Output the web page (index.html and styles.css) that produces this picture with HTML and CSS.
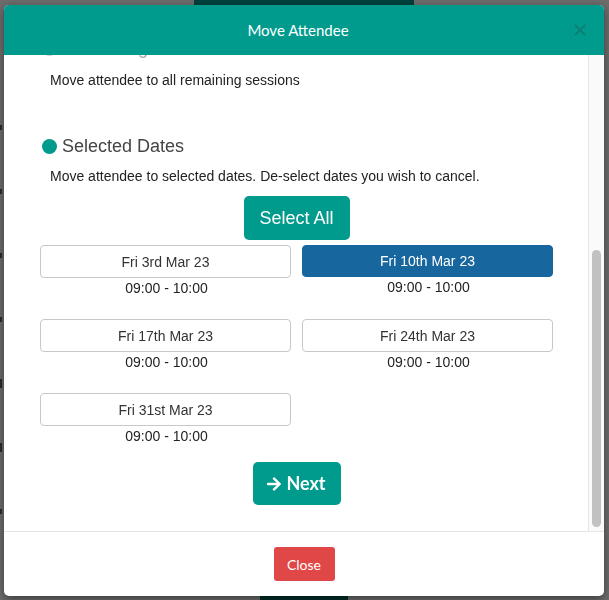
FILE: index.html
```html
<!DOCTYPE html>
<html lang="en">
<head>
<meta charset="utf-8">
<title>Move Attendee</title>
<link rel="stylesheet" href="styles.css">
</head>
<body>
<div class="page">
  <div class="page-top"><div class="page-tab"></div></div>
  <div class="page-rows">
    <div class="page-row"><span class="mark"></span></div>
    <div class="page-row"><span class="mark"></span></div>
    <div class="page-row"><span class="mark"></span></div>
    <div class="page-row"><span class="mark"></span></div>
    <div class="page-row"><span class="mark tall"></span></div>
    <div class="page-row"><span class="mark tall"></span></div>
    <div class="page-row"><span class="mark"></span></div>
  </div>
  <div class="page-bottom"><div class="page-btn"></div></div>
</div>
<div class="backdrop"></div>
<div class="modal">
  <div class="modal-header">
    <h4 class="modal-title">Move Attendee</h4>
    <button class="close" aria-label="Close">
      <svg width="12" height="12" viewBox="0 0 12 12"><path d="M1.5 1.5L10.5 10.5M10.5 1.5L1.5 10.5" stroke="#0b7f74" stroke-width="1.9" stroke-linecap="square"/></svg>
    </button>
  </div>
  <div class="modal-body-wrap">
    <div class="modal-body">
      <div class="option option-cut">
        <span class="radio radio-off"></span>
        <span class="option-label">Remaining Dates</span>
      </div>
      <p class="desc">Move attendee to all remaining sessions</p>

      <div class="option option-selected">
        <span class="radio radio-on"></span>
        <span class="option-label">Selected Dates</span>
      </div>
      <p class="desc">Move attendee to selected dates. De-select dates you wish to cancel.</p>

      <div class="center-row">
        <button class="btn btn-teal btn-select">Select All</button>
      </div>

      <div class="dates">
        <div class="date">
          <button class="date-btn">Fri 3rd Mar 23</button>
          <div class="time">09:00 - 10:00</div>
        </div>
        <div class="date">
          <button class="date-btn active">Fri 10th Mar 23</button>
          <div class="time">09:00 - 10:00</div>
        </div>
        <div class="date">
          <button class="date-btn">Fri 17th Mar 23</button>
          <div class="time">09:00 - 10:00</div>
        </div>
        <div class="date">
          <button class="date-btn">Fri 24th Mar 23</button>
          <div class="time">09:00 - 10:00</div>
        </div>
        <div class="date">
          <button class="date-btn">Fri 31st Mar 23</button>
          <div class="time">09:00 - 10:00</div>
        </div>
      </div>

      <div class="center-row">
        <button class="btn btn-teal btn-next">
          <svg class="arrow" width="14" height="16" viewBox="0 0 448 512"><path fill="#fff" d="M190.5 66.9l22.2-22.2c9.4-9.4 24.6-9.4 33.9 0L441 239c9.4 9.4 9.4 24.6 0 33.9L246.6 467.3c-9.4 9.4-24.6 9.4-33.9 0l-22.2-22.2c-9.5-9.5-9.3-25 .4-34.3L311.4 296H24c-13.3 0-24-10.7-24-24v-32c0-13.3 10.7-24 24-24h287.4L190.9 101.2c-9.8-9.3-10-24.8-.4-34.3z"/></svg>
          <span>Next</span>
        </button>
      </div>
    </div>
    <div class="scrollbar"><div class="thumb"></div></div>
  </div>
  <div class="modal-footer">
    <button class="btn btn-red">Close</button>
  </div>
</div>
</body>
</html>
```
FILE: styles.css
```css
* { box-sizing: border-box; }
html, body { margin: 0; padding: 0; }
body {
  width: 609px;
  height: 600px;
  overflow: hidden;
  font-family: "Liberation Sans", Arial, sans-serif;
  background: #ffffff;
  position: relative;
}

/* page behind the dialog */
.page {
  width: 609px;
  height: 600px;
  display: flex;
  flex-direction: column;
  background: #ffffff;
}
.page-top { height: 5px; display: flex; }
.page-tab { margin-left: 194px; width: 220px; background: #009b8d; }
.page-rows {
  flex: 1;
  display: flex;
  flex-direction: column;
  padding-top: 112px;
  gap: 44px;
}
.page-row {
  height: 20px;
  display: flex;
  align-items: center;
}
.mark {
  width: 2px;
  height: 5px;
  background: #666;
}
.mark.tall { height: 9px; }
.page-bottom { height: 8px; display: flex; margin-top: auto; }
.page-btn { margin-left: 260px; width: 88px; background: #006b61; }

.backdrop {
  position: fixed;
  inset: 0;
  background: rgba(0, 0, 0, 0.58);
}

/* dialog */
.modal {
  position: fixed;
  left: 4px;
  top: 5px;
  width: 600px;
  height: 591px;
  background: #ffffff;
  border-radius: 5px;
  box-shadow: 0 3px 9px rgba(0, 0, 0, 0.45);
  display: flex;
  flex-direction: column;
  overflow: hidden;
}
.modal-header {
  height: 50px;
  flex: none;
  background: #009b8d;
  display: flex;
  align-items: center;
  justify-content: center;
  position: relative;
}
.modal-title {
  margin: 0 0 0 -12px;
  font-family: Lato, "Liberation Sans", sans-serif;
  font-weight: 400;
  font-size: 15px;
  color: #ffffff;
}
.close {
  position: absolute;
  right: 18px;
  top: 19px;
  width: 12px;
  height: 12px;
  padding: 0;
  border: 0;
  background: transparent;
  display: flex;
}

.modal-body-wrap {
  height: 476px;
  flex: none;
  display: flex;
  overflow: hidden;
}
.modal-body {
  flex: 1;
  padding: 0 35px 0 36px;
  overflow: hidden;
  color: #333;
}
.scrollbar {
  width: 16px;
  flex: none;
  background: #fafafa;
  border-left: 1px solid #e6e6e6;
  padding: 195px 3px 4px 3px;
  display: flex;
}
.thumb {
  flex: 1;
  background: #c1c1c1;
  border-radius: 5px;
}

.option {
  display: flex;
  align-items: center;
  gap: 5px;
  padding-left: 2px;
  height: 24px;
}
.option-cut { margin-top: -19px; }
.option-selected { margin-top: 44px; }
.radio {
  width: 15px;
  height: 15px;
  border-radius: 50%;
  flex: none;
}
.radio-on { background: #009b8d; }
.radio-off { background: #d0d0d0; }
.option-label {
  font-size: 18px;
  color: #444;
  line-height: 24px;
}
.option-cut .option-label { color: #aaa; }
.desc {
  margin: 0;
  padding-left: 10px;
  font-size: 14px;
  line-height: 20px;
  color: #222;
}
.option-cut + .desc { margin-top: 10px; }
.option-selected + .desc { margin-top: 8px; }

.center-row {
  display: flex;
  justify-content: center;
}
.btn {
  border: 0;
  border-radius: 5px;
  color: #ffffff;
  cursor: pointer;
}
.btn-teal { background: #009b8d; }
.btn-select {
  margin-top: 10px;
  height: 44px;
  width: 106px;
  padding: 0;
  font-family: "Liberation Sans", Arial, sans-serif;
  font-size: 18px;
}
.btn-next {
  margin-top: 15px;
  width: 88px;
  height: 43px;
  padding: 0;
  display: flex;
  align-items: center;
  justify-content: center;
  gap: 5px;
  font-family: Lato, "Liberation Sans", sans-serif;
  font-weight: 700;
  font-size: 18px;
}
.btn-next span { margin-top: -1px; }

.dates {
  margin-top: 5px;
  display: grid;
  grid-template-columns: 251px 251px;
  column-gap: 11px;
  row-gap: 20px;
}
.date {
  display: flex;
  flex-direction: column;
}
.date-btn {
  height: 33px;
  border: 1px solid #c8c8c8;
  border-radius: 4px;
  background: #ffffff;
  font-family: "Liberation Sans", Arial, sans-serif;
  font-size: 14px;
  color: #333;
  padding: 0;
}
.date-btn.active {
  height: 32px;
  background: #17669e;
  border-color: #17669e;
  color: #ffffff;
}
.time {
  text-align: center;
  font-size: 14px;
  line-height: 21px;
  color: #222;
  padding-left: 2px;
}
.date-btn.active + .time { line-height: 20px; }

.modal-footer {
  flex: 1;
  border-top: 1px solid #e5e5e5;
  display: flex;
  justify-content: center;
  align-items: flex-start;
  padding-top: 15px;
}
.btn-red {
  background: #e04848;
  height: 34px;
  width: 61px;
  padding: 0;
  border-radius: 3px;
  font-family: Lato, "Liberation Sans", sans-serif;
  font-size: 14px;
}
```
